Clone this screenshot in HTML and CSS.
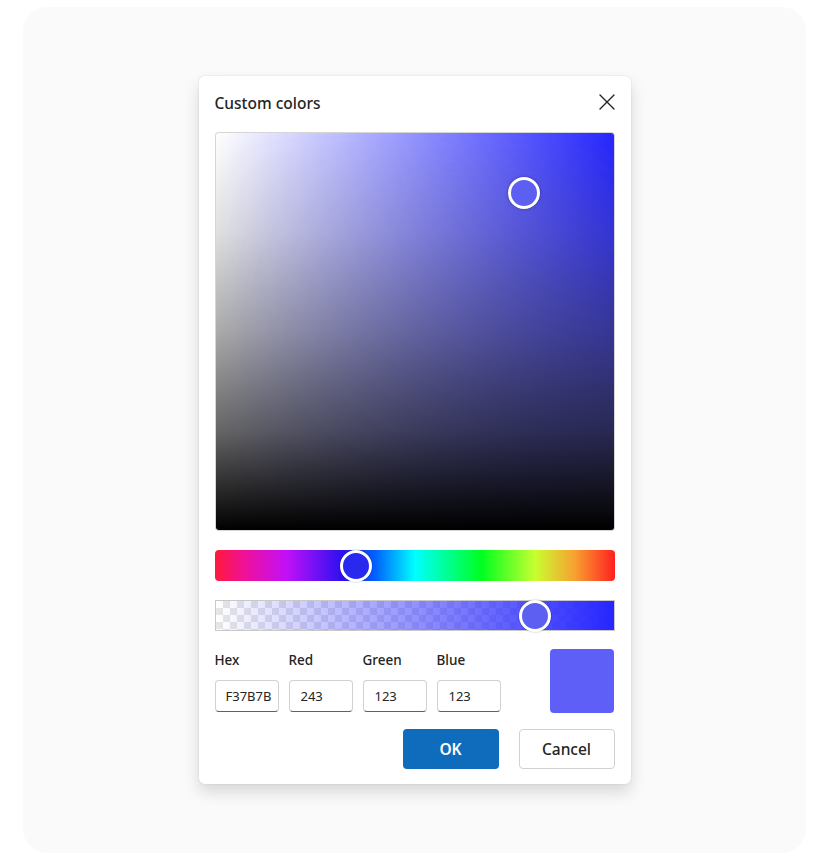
FILE: index.html
```html
<!DOCTYPE html>
<html lang="en">
<head>
<meta charset="utf-8">
<title>Custom colors</title>
<link rel="stylesheet" href="styles.css">
</head>
<body>
<div class="frame">
  <div class="card">
    <div class="dialog">
      <div class="header">
        <h1 class="title">Custom colors</h1>
        <button class="close" aria-label="Close">
          <svg width="20" height="20" viewBox="0 0 20 20"><path d="M3 3 L17 17 M17 3 L3 17" stroke="#242424" stroke-width="1.4" fill="none" stroke-linecap="round"/></svg>
        </button>
      </div>
      <div class="area">
        <span class="thumb area-thumb" style="left: 77.5%; top: 15%;"></span>
      </div>
      <div class="hue">
        <span class="thumb hue-thumb" style="left: 35.25%;"></span>
      </div>
      <div class="alpha">
        <div class="alpha-fill"></div>
        <span class="thumb alpha-thumb" style="left: 80.25%;"></span>
      </div>
      <div class="fields">
        <label class="field"><span class="label">Hex</span><input class="input" value="F37B7B"></label>
        <label class="field"><span class="label">Red</span><input class="input" value="243"></label>
        <label class="field"><span class="label">Green</span><input class="input" value="123"></label>
        <label class="field"><span class="label">Blue</span><input class="input" value="123"></label>
        <div class="swatch"></div>
      </div>
      <div class="actions">
        <button class="btn primary">OK</button>
        <button class="btn secondary">Cancel</button>
      </div>
    </div>
  </div>
</div>
</body>
</html>
```
FILE: styles.css
```css
* { box-sizing: border-box; }
html, body { margin: 0; padding: 0; background: #ffffff; }
body { font-family: "Noto Sans", "Open Sans", sans-serif; color: #242424; }
.frame { padding: 7px 22px 15px 23px; }
.card {
  height: 846px;
  background: #fafafa;
  border-radius: 24px;
  display: flex;
  align-items: center;
  justify-content: center;
}
.dialog {
  width: 432px;
  background: #fff;
  border-radius: 6px;
  padding: 16px 16px 15px;
  box-shadow: 0 8px 16px rgba(0,0,0,0.14), 0 0 2px rgba(0,0,0,0.12);
  display: flex;
  flex-direction: column;
}
.header {
  display: flex;
  align-items: center;
  justify-content: space-between;
  height: 24px;
  margin-bottom: 16px;
}
.title { margin: 0; font-size: 15.5px; font-weight: 500; line-height: 24px; margin-top: -2px; }
.close {
  border: 0; background: none; padding: 0; width: 20px; height: 20px;
  margin-right: -2px; margin-top: -5px;
  display: flex; align-items: center; justify-content: center;
}
.area {
  position: relative;
  width: 400px;
  height: 399px;
  border-radius: 4px;
  border: 1px solid rgba(0,0,0,0.16);
  overflow: hidden;
  background: linear-gradient(to right, #ffffff 0%, #2626ff 100%);
  background-clip: padding-box;
}
.area::before {
  content: "";
  position: absolute; inset: 0;
  background: linear-gradient(to right, rgba(150,150,170,0) 0%, rgba(150,150,170,1) 100%);
  -webkit-mask-image: linear-gradient(to bottom, rgba(0,0,0,0) 0%, rgba(0,0,0,0.75) 100%);
  mask-image: linear-gradient(to bottom, rgba(0,0,0,0) 0%, rgba(0,0,0,0.75) 100%);
}
.area::after {
  content: "";
  position: absolute; inset: 0;
  background: linear-gradient(to top, #000 0%, rgba(0,0,0,0.6) 25%, rgba(0,0,0,0.33) 50%, rgba(0,0,0,0.12) 75%, rgba(0,0,0,0) 100%);
}
.thumb {
  position: absolute;
  z-index: 1;
  width: 32px; height: 32px;
  border-radius: 50%;
  border: 3.5px solid #fff;
  transform: translate(-50%, -50%);
  box-shadow: 0 0 3px rgba(0,0,0,0.35);
}
.area-thumb { background: #5d5ff2; }
.hue {
  position: relative;
  margin-top: 19px;
  height: 31px;
  border-radius: 4px;
  background: linear-gradient(to right, #ff1a3a 0%, #ee10a0 8%, #c010f8 18%, #2a10f0 32%, #0060ff 40%, #00ffff 50%, #00ff20 66.67%, #c8ff30 80%, #f8a030 90%, #ff2020 100%);
}
.hue-thumb { top: 50%; background: #2828ee; box-shadow: 0 0 2px rgba(0,0,0,0.3); }
.alpha {
  position: relative;
  margin-top: 19px;
  height: 31px;
  border: 1px solid #c8c8c8;
  background-color: #fff;
  background-image:
    linear-gradient(45deg, #e6e6e6 25%, transparent 25%, transparent 75%, #e6e6e6 75%),
    linear-gradient(45deg, #e6e6e6 25%, transparent 25%, transparent 75%, #e6e6e6 75%);
  background-size: 14px 14px;
  background-position: 0 0, 7px 7px;
}
.alpha-fill {
  position: absolute; inset: 0;
  background: linear-gradient(to right, rgba(38,38,255,0) 0%, rgba(38,38,255,1) 100%);
}
.alpha-thumb { top: 50%; background: #5d5ff2; box-shadow: 0 0 2px rgba(0,0,0,0.3); }
.fields {
  display: flex;
  gap: 10px;
  margin-top: 18px;
  align-items: flex-start;
}
.field { display: flex; flex-direction: column; gap: 10px; width: 64px; }
.label { font-size: 13.5px; font-weight: 500; line-height: 20px; padding-top: 1px; }
.input {
  width: 64px; height: 32px;
  border: 1px solid #d1d1d1;
  border-bottom-color: #616161;
  border-radius: 4px;
  padding: 0 0 0 11px;
  font-family: inherit;
  font-size: 13px;
  color: #242424;
  background: #fff;
}
.field:first-child .input { padding-left: 10px; }
.swatch {
  margin-left: auto;
  width: 64px; height: 64px;
  border-radius: 4px;
  background: #5d5ff6;
  margin-right: 1px;
}
.actions {
  display: flex;
  justify-content: flex-end;
  gap: 20px;
  margin-top: 16px;
}
.btn {
  width: 96px; height: 40px;
  border-radius: 4px;
  font-family: inherit;
  font-size: 15.5px;
  font-weight: 600;
}
.primary { background: #0f6cbd; color: #fff; border: 0; }
.secondary { background: #fff; color: #242424; border: 1px solid #d1d1d1; font-weight: 500; }
```
